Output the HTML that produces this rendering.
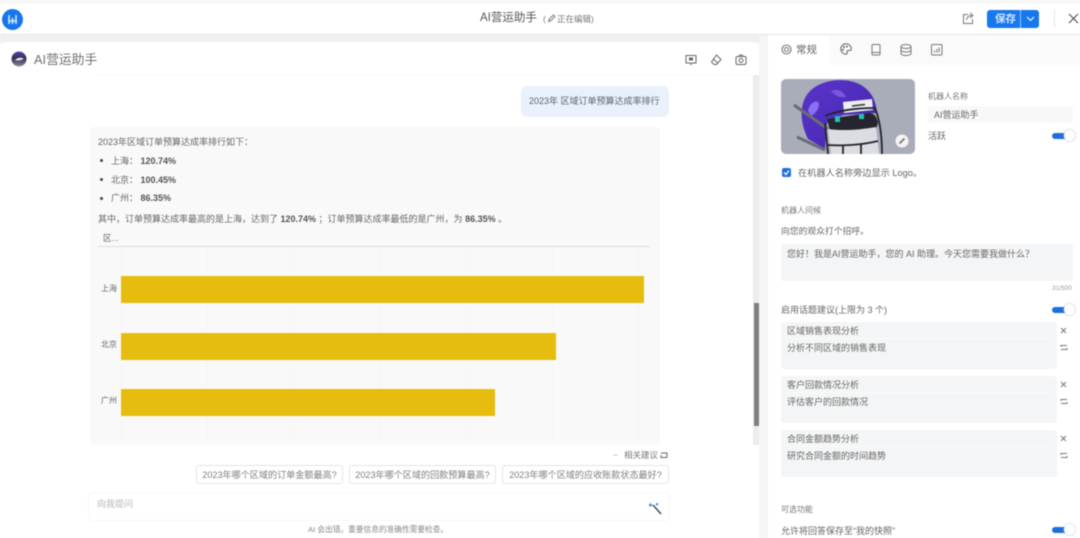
<!DOCTYPE html>
<html lang="zh"><head><meta charset="utf-8"><title>AI营运助手</title>
<style>
*{box-sizing:border-box}
html,body{margin:0;padding:0;width:1080px;height:538px;overflow:hidden;background:#fff}
#r{position:relative;width:1080px;height:538px;overflow:hidden;background:#fff;font-family:"Liberation Sans","Noto Sans CJK SC",sans-serif;color:#666;filter:blur(.5px)}
.a{position:absolute}
.t{position:absolute;white-space:nowrap;line-height:1.2}
b{font-weight:700;color:#555}
.bar{position:absolute;left:121px;background:#e6bd0e}
.chip{position:absolute;top:465px;height:19px;border:1px solid #dfe5ee;border-radius:3px;background:#fff;font-size:9.100px;line-height:18px;color:#808080;text-align:center;white-space:nowrap}
.box{position:absolute;left:781px;width:276px;background:#f4f5f6;border-radius:3px}
.sw{position:absolute;width:24px;height:14px}
.sw i{position:absolute;left:0;top:3.500px;width:20px;height:6px;border-radius:3px;background:#1e6fdc}
.sw u{position:absolute;left:12px;top:1px;width:11px;height:11px;border-radius:50%;background:#fff;box-shadow:0 0 2px #9db8d8}
svg{position:absolute;overflow:visible}
</style></head><body><div id="r">
<!-- page chrome -->
<div class="a" style="left:0;top:0;width:1080px;height:4px;background:#f7f7f7"></div>
<div class="a" style="left:0;top:34px;width:1080px;height:1px;background:#e4e4e4"></div>
<div class="a" style="left:0;top:35px;width:768px;height:8px;background:#f0f0f0"></div>
<div class="a" style="left:0;top:42px;width:759px;height:496px;background:#fff;border-radius:6px 6px 0 0"></div>
<div class="a" style="left:759px;top:35px;width:9px;height:503px;background:#f5f5f5"></div>
<div class="a" style="left:768px;top:35px;width:312px;height:503px;background:#fff"></div>

<!-- logo -->
<div class="a" style="left:2px;top:9px;width:21px;height:21px;border-radius:50%;background:#1677ea"></div>
<svg style="left:2px;top:9px" width="21" height="21" fill="none" stroke="#cfe4fb" stroke-width="1.600"><path d="M7 6v9M10.500 9v6M14 6v9M6 12h9"/></svg>

<!-- header -->
<div class="t" style="left:480px;top:12px;font-size:11.500px;color:#555">AI营运助手</div>
<div class="t" style="left:543px;top:14px;font-size:8.500px;color:#777">(</div>
<svg style="left:547px;top:14px" width="9" height="9" fill="none" stroke="#777"><path d="M1.500 7.500l1-3 4-3.500 1.500 1.500-4 4z"/></svg>
<div class="t" style="left:557px;top:14px;font-size:8.500px;color:#777">正在编辑)</div>
<svg style="left:962px;top:12px" width="13" height="13" fill="none" stroke="#777"><path d="M6 2.500H1.500v9h9V7"/><path d="M4.500 8c.5-3 2.500-4.500 5-4.500M8 1l3 2.500L8 6"/></svg>
<div class="a" style="left:987px;top:10px;width:52px;height:18px;border-radius:3px;background:#1677ee"></div>
<div class="a" style="left:1020px;top:10px;width:1px;height:18px;background:#9cc5f7"></div>
<div class="t" style="left:995px;top:13px;font-size:10.500px;font-weight:700;color:#d5e7fc">保存</div>
<svg style="left:1026px;top:16px" width="9" height="6" fill="none" stroke="#d8e9fd" stroke-width="1.300"><path d="M1 1l3.500 3.500L8 1"/></svg>
<div class="a" style="left:1054px;top:10px;width:1px;height:17px;background:#e4e4e4"></div>
<svg style="left:1068px;top:13px" width="11" height="11" fill="none" stroke="#555" stroke-width="1.200"><path d="M1 1l9 9M10 1l-9 9"/></svg>

<!-- left title row -->
<svg style="left:11px;top:51px" width="16" height="16"><defs><linearGradient id="g" x1="0" y1="0" x2="0" y2="1"><stop offset="0" stop-color="#5a3fb0"/><stop offset=".45" stop-color="#33304f"/><stop offset="1" stop-color="#8a8d99"/></linearGradient></defs><circle cx="8" cy="8" r="7.500" fill="url(#g)"/><path d="M4 9c3-3 6-2.500 9-1.500-3 2-6 2.500-9 1.500z" fill="#e8e8f0"/></svg>
<div class="t" style="left:34px;top:52px;font-size:12.800px;color:#707070">AI营运助手</div>
<div class="a" style="left:95px;top:75px;width:660px;height:1px;background:#f7f7f7"></div>
<svg style="left:685px;top:54px" width="12" height="12" fill="none" stroke="#666"><path d="M1 1.500h10v7.500H7L6 10.500 5 9H1z"/><rect x="4" y="3.500" width="4" height="3" fill="#666" stroke="none"/></svg>
<svg style="left:710px;top:54px" width="12" height="12" fill="none" stroke="#666"><path d="M6.500 1L11 5.500 6.500 10.500H4L1.500 8z"/><path d="M3.500 5l4 4"/></svg>
<svg style="left:735px;top:54px" width="12" height="12" fill="none" stroke="#666"><rect x="1" y="2.500" width="10" height="8" rx="1.500"/><circle cx="6" cy="6.500" r="2"/><path d="M4 2.500l.8-1.500h2.400l.8 1.500"/></svg>

<!-- scrollbar -->
<div class="a" style="left:753px;top:75px;width:6px;height:370px;background:#ececec"></div>
<div class="a" style="left:754px;top:303px;width:5px;height:123px;background:#808080"></div>

<!-- user bubble -->
<div class="a" style="left:521px;top:86px;width:148px;height:31px;border-radius:6px;background:#e9f1fb"></div>
<div class="t" style="left:529px;top:96px;font-size:9px;color:#5c6470">2023年 区域订单预算达成率排行</div>

<!-- answer card -->
<div class="a" style="left:90px;top:127px;width:570px;height:318px;background:#f9f9f9;border-radius:4px"></div>
<div class="t" style="left:98px;top:137px;font-size:9px;color:#666">2023年区域订单预算达成率排行如下：</div>
<div class="a" style="left:100px;top:159px;width:3px;height:3px;border-radius:50%;background:#444"></div>
<div class="t" style="left:111px;top:156px;font-size:9px;color:#666">上海： <b>120.74%</b></div>
<div class="a" style="left:100px;top:178px;width:3px;height:3px;border-radius:50%;background:#444"></div>
<div class="t" style="left:111px;top:175px;font-size:9px;color:#666">北京： <b>100.45%</b></div>
<div class="a" style="left:100px;top:197px;width:3px;height:3px;border-radius:50%;background:#444"></div>
<div class="t" style="left:111px;top:193px;font-size:9px;color:#666">广州： <b>86.35%</b></div>
<div class="t" style="left:98px;top:214px;font-size:9px;color:#666">其中，订单预算达成率最高的是上海，达到了 <b>120.74%</b> ；订单预算达成率最低的是广州，为 <b>86.35%</b> 。</div>
<div class="t" style="left:103px;top:233px;font-size:8.500px;color:#666">区...</div>
<div class="a" style="left:98px;top:246px;width:552px;height:1px;background:#dcdcdc"></div>
<!-- grid -->
<div class="a" style="left:121px;top:247px;width:1px;height:197px;background:#f6f6f6"></div>
<div class="a" style="left:207px;top:247px;width:1px;height:197px;background:#f6f6f6"></div>
<div class="a" style="left:293px;top:247px;width:1px;height:197px;background:#f6f6f6"></div>
<div class="a" style="left:380px;top:247px;width:1px;height:197px;background:#f6f6f6"></div>
<div class="a" style="left:466px;top:247px;width:1px;height:197px;background:#f6f6f6"></div>
<div class="a" style="left:552px;top:247px;width:1px;height:197px;background:#f6f6f6"></div>
<div class="a" style="left:638px;top:247px;width:1px;height:197px;background:#f6f6f6"></div>
<!-- bars -->
<div class="bar" style="top:276px;width:523px;height:27px"></div>
<div class="bar" style="top:333px;width:435px;height:27px"></div>
<div class="bar" style="top:389px;width:374px;height:27px"></div>
<div class="t" style="left:101px;top:284px;font-size:8px;color:#666">上海</div>
<div class="t" style="left:101px;top:340px;font-size:8px;color:#666">北京</div>
<div class="t" style="left:101px;top:396px;font-size:8px;color:#666">广州</div>

<!-- suggestions -->
<div class="t" style="left:613px;top:451px;font-size:8px;color:#999">~</div>
<div class="t" style="left:624px;top:450px;font-size:8.500px;color:#777">相关建议</div>
<svg style="left:660px;top:451px" width="8" height="8" fill="none" stroke="#666"><path d="M1 2h6v4.500M7 6.500H1V4"/></svg>
<div class="chip" style="left:196px;width:147px">2023年哪个区域的订单金额最高?</div>
<div class="chip" style="left:349px;width:147px">2023年哪个区域的回款预算最高?</div>
<div class="chip" style="left:502px;width:167px">2023年哪个区域的应收账款状态最好?</div>

<!-- input -->
<div class="a" style="left:88px;top:492px;width:582px;height:29px;border:1px solid #f6f6f6;border-radius:5px;background:#fff"></div>
<div class="t" style="left:97px;top:499px;font-size:9px;color:#b5b5b5">向我提问</div>
<svg style="left:648px;top:502px" width="14" height="13" fill="none"><path d="M5 3l8 9" stroke="#456" stroke-width="1.600"/><path d="M2.500 1v4M.5 3h4M9 1v2.500M7.800 2.200h2.500" stroke="#2f80d8"/></svg>
<div class="t" style="left:308px;top:525px;font-size:7.700px;color:#888">AI 会出错。重要信息的准确性需要检查。</div>

<!-- right tabs -->
<div class="a" style="left:830px;top:35px;width:250px;height:30px;background:#fafafa"></div>
<svg style="left:781px;top:44px" width="11" height="11" fill="none" stroke="#777" stroke-width="1.100"><circle cx="5.500" cy="5.500" r="4.500"/><circle cx="5.500" cy="5.500" r="2"/></svg>
<div class="t" style="left:796px;top:44px;font-size:10.500px;color:#666">常规</div>
<svg style="left:840px;top:43px" width="12" height="12"><path d="M6 .8a5.200 5.200 0 1 0 0 10.400c1.500 0 1.500-1.200 1-2-.4-1 .3-1.700 1.300-1.700h1.500c1 0 1.400-.8 1.400-1.800C11.200 2.800 8.800.8 6 .8z" fill="none" stroke="#666"/><circle cx="4" cy="4" r="1" fill="#666"/><circle cx="7" cy="3.500" r="1" fill="#666"/><circle cx="3" cy="6.800" r="1" fill="#666"/></svg>
<svg style="left:871px;top:44px" width="10" height="12" fill="none" stroke="#777"><rect x="1" y=".5" width="8" height="10.500" rx="1"/><path d="M1 8.500h8"/></svg>
<svg style="left:900px;top:44px" width="12" height="12" fill="none" stroke="#777"><ellipse cx="6" cy="2.500" rx="5" ry="2"/><path d="M1 2.500v7c0 1.100 2.200 2 5 2s5-.9 5-2v-7M1 6c0 1.100 2.200 2 5 2s5-.9 5-2"/></svg>
<svg style="left:931px;top:44px" width="12" height="12" fill="none" stroke="#777"><rect x=".5" y=".5" width="10.500" height="10.500" rx="1"/><path d="M3.500 8.500V6.500M5.800 8.500V5M8 8.500V3.500"/></svg>

<!-- avatar -->
<svg style="left:781px;top:79px;border-radius:5px" width="134" height="75" viewBox="0 0 134 75">
<defs><clipPath id="c"><rect width="134" height="75" rx="5"/></clipPath><linearGradient id="h" x1="0" y1="0" x2="1" y2="1"><stop offset="0" stop-color="#5a35c8"/><stop offset="1" stop-color="#4326b0"/></linearGradient></defs>
<g clip-path="url(#c)">
<rect width="134" height="75" fill="#a9adba"/>
<path d="M27 60C18 42 18 22 30 11 42 0 66-2 80 6c10 6 15 15 16 28L62 36 46 44 44 70z" fill="url(#h)"/>
<path d="M27 32c1-7 7-11 10-9 3 3-1 11-7 14z" fill="#8a6ff0"/>
<path d="M50 12c7-3 12 0 15 6-6 1-11-1-15-6z" fill="#7a55e0"/>
<path d="M13 26l34 24" stroke="#6c6c72" stroke-width="3" fill="none"/>
<path d="M16 58l28 13" stroke="#6c6c72" stroke-width="3" fill="none"/>
<path d="M46 40l42-6c5 0 8 4 9 10l-2 6-46 2z" fill="#26252f"/>
<path d="M47 50c14 2 32 1 48-2l3 27H50z" fill="#dcdde2"/>
<rect x="54" y="37" width="5" height="6" fill="#21c4ae"/><rect x="78" y="35" width="5" height="5" fill="#21c4ae"/>
<path d="M62 23l29-3 1 11-29 3z" fill="#eceef2"/>
<path d="M71 27l13-1.500" stroke="#33333c" stroke-width="1.500"/>
<path d="M44 37c14-6 34-8 50-8 4 10 7 26 7 46M44 44l3 31M47 66c14 1 34 0 50-4M62 66v9M80 65v10" stroke="#24242c" stroke-width="1.800" fill="none"/>
<circle cx="121" cy="62" r="6.500" fill="#f4f4f6"/>
<path d="M118.500 64.500l5-5" stroke="#777" stroke-width="1.800"/>
</g></svg>

<!-- name fields -->
<div class="t" style="left:928px;top:92px;font-size:8px;color:#777">机器人名称</div>
<div class="a" style="left:928px;top:106px;width:145px;height:17px;background:#f8f8f8;border-radius:2px"></div>
<div class="t" style="left:934px;top:110px;font-size:9px;color:#666">AI营运助手</div>
<div class="t" style="left:928px;top:131px;font-size:9px;color:#666">活跃</div>
<div class="sw" style="left:1052px;top:129px"><i></i><u></u></div>

<div class="a" style="left:782px;top:168px;width:9px;height:9px;border-radius:2px;background:#1d6fdd"></div>
<svg style="left:782px;top:168px" width="9" height="9" fill="none" stroke="#fff" stroke-width="1.300"><path d="M2 4.500l2 2 3-4"/></svg>
<div class="t" style="left:798px;top:168px;font-size:9.200px;color:#666">在机器人名称旁边显示 Logo。</div>

<!-- greeting -->
<div class="t" style="left:781px;top:206px;font-size:8px;color:#777">机器人问候</div>
<div class="t" style="left:781px;top:226px;font-size:8.800px;color:#666">向您的观众打个招呼。</div>
<div class="a" style="left:781px;top:244px;width:292px;height:37px;background:#f4f5f6;border-radius:3px"></div>
<div class="t" style="left:787px;top:249px;font-size:9px;color:#666">您好！我是AI营运助手，您的 AI 助理。今天您需要我做什么？</div>
<div class="t" style="left:1052px;top:285px;font-size:6.500px;color:#999">31/500</div>

<div class="t" style="left:781px;top:305px;font-size:9px;color:#666">启用话题建议(上限为 3 个)</div>
<div class="sw" style="left:1052px;top:303px"><i></i><u></u></div>

<!-- topic boxes -->
<div class="box" style="top:322px;height:47px"></div>
<div class="a" style="left:785px;top:338px;width:268px;height:1px;background:#fafafa"></div>
<div class="t" style="left:787px;top:326px;font-size:9px;color:#666">区域销售表现分析</div>
<div class="t" style="left:787px;top:343px;font-size:9px;color:#666">分析不同区域的销售表现</div>
<div class="box" style="top:376px;height:47px"></div>
<div class="a" style="left:785px;top:392px;width:268px;height:1px;background:#fafafa"></div>
<div class="t" style="left:787px;top:380px;font-size:9px;color:#666">客户回款情况分析</div>
<div class="t" style="left:787px;top:397px;font-size:9px;color:#666">评估客户的回款情况</div>
<div class="box" style="top:430px;height:47px"></div>
<div class="a" style="left:785px;top:446px;width:268px;height:1px;background:#fafafa"></div>
<div class="t" style="left:787px;top:434px;font-size:9px;color:#666">合同金额趋势分析</div>
<div class="t" style="left:787px;top:451px;font-size:9px;color:#666">研究合同金额的时间趋势</div>

<svg style="left:1060px;top:327px" width="7" height="7" fill="none" stroke="#777"><path d="M1 1l5 5M6 1L1 6"/></svg>
<svg style="left:1060px;top:344px" width="8" height="7" fill="none" stroke="#777"><path d="M1 3V1.500h6M7 4v1.500H1"/></svg>
<svg style="left:1060px;top:381px" width="7" height="7" fill="none" stroke="#777"><path d="M1 1l5 5M6 1L1 6"/></svg>
<svg style="left:1060px;top:398px" width="8" height="7" fill="none" stroke="#777"><path d="M1 3V1.500h6M7 4v1.500H1"/></svg>
<svg style="left:1060px;top:435px" width="7" height="7" fill="none" stroke="#777"><path d="M1 1l5 5M6 1L1 6"/></svg>
<svg style="left:1060px;top:452px" width="8" height="7" fill="none" stroke="#777"><path d="M1 3V1.500h6M7 4v1.500H1"/></svg>

<div class="t" style="left:781px;top:505px;font-size:8px;color:#777">可选功能</div>
<div class="t" style="left:781px;top:526px;font-size:9px;color:#666">允许将回答保存至“我的快照”</div>
<div class="sw" style="left:1052px;top:523px"><i></i><u></u></div>
</div></body></html>
